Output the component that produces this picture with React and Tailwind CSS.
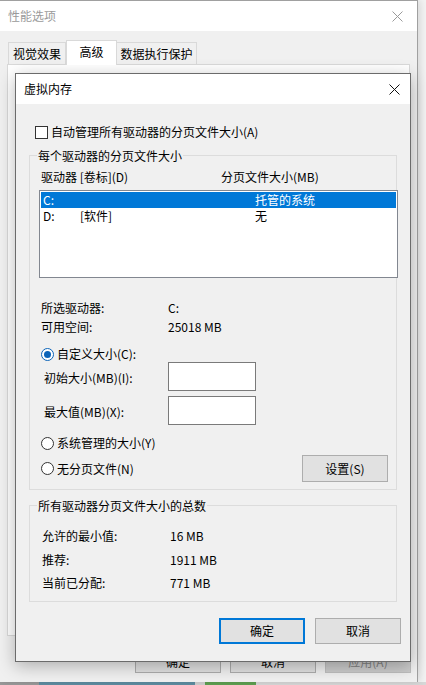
import React from "react";

function CloseIcon({ color }) {
  return (
    <svg width="11" height="11" viewBox="0 0 11 11" className="block">
      <path d="M0.5 0.5 L10.5 10.5 M10.5 0.5 L0.5 10.5" stroke={color} strokeWidth="1" fill="none" />
    </svg>
  );
}

function Radio({ checked, label }) {
  return (
    <div className="flex h-[16px] items-center">
      {checked ? (
        <span className="flex h-[13px] w-[13px] items-center justify-center rounded-full border border-[#0b63b8] bg-white">
          <span className="h-[7px] w-[7px] rounded-full bg-[#0b63b8]" />
        </span>
      ) : (
        <span className="h-[13px] w-[13px] rounded-full border border-[#333333] bg-white" />
      )}
      <span className="ml-[3px]">{label}</span>
    </div>
  );
}

function Group({ title, children, className }) {
  return (
    <div className={"w-[368px] border border-[#dcdcdc] " + (className || "")}>
      <div className="-mt-[8px] ml-[7px] w-fit bg-[#f0f0f0] px-px leading-[16px]">{title}</div>
      {children}
    </div>
  );
}

function VirtualMemoryDialog() {
  return (
    <div className="absolute left-[15px] top-[72px] flex h-[589px] w-[396px] flex-col border border-[#6b6b6b] bg-[#f0f0f0] shadow-[0_4px_16px_rgba(0,0,0,0.28)]">
      <div className="flex h-[30px] items-center justify-between bg-white pl-[8px] pr-[10px]">
        <span className="text-black">虚拟内存</span>
        <CloseIcon color="#111111" />
      </div>

      <div className="mt-[21px] flex h-[14px] items-center pl-[19px]">
        <span className="h-[13px] w-[13px] border border-[#333333] bg-white" />
        <span className="ml-[3px]">自动管理所有驱动器的分页文件大小(A)</span>
      </div>

      <Group title="每个驱动器的分页文件大小" className="ml-[13px] mt-[16px]">
        <div className="mt-[5px] flex pl-[11px]">
          <span className="w-[180px]">驱动器 [卷标](D)</span>
          <span>分页文件大小(MB)</span>
        </div>
        <div className="ml-[9px] mt-[5px] h-[88px] w-[359px] border border-[#828790] bg-white p-px">
          <div className="flex h-[16px] items-center bg-[#0078d7] pl-[2px] text-white">
            <span className="w-[37px]">C:</span>
            <span className="w-[175px]"></span>
            <span>托管的系统</span>
          </div>
          <div className="flex h-[16px] items-center pl-[2px]">
            <span className="w-[37px]">D:</span>
            <span className="w-[175px]">[软件]</span>
            <span>无</span>
          </div>
        </div>

        <div className="mt-[20px] pl-[11px] leading-[19px]">
          <div className="flex">
            <span className="w-[127px]">所选驱动器:</span>
            <span>C:</span>
          </div>
          <div className="flex">
            <span className="w-[127px]">可用空间:</span>
            <span>25018 MB</span>
          </div>
        </div>

        <div className="mt-[10px] pl-[11px]">
          <Radio checked label="自定义大小(C):" />
        </div>

        <div className="flex items-center pl-[14px]">
          <span className="mt-[3px] w-[124px]">初始大小(MB)(I):</span>
          <div className="h-[29px] w-[88px] border border-[#7a7a7a] bg-white" />
        </div>
        <div className="mt-[5px] flex items-center pl-[14px]">
          <span className="mt-[3px] w-[124px]">最大值(MB)(X):</span>
          <div className="h-[29px] w-[88px] border border-[#7a7a7a] bg-white" />
        </div>

        <div className="mt-[10px] pl-[11px]">
          <Radio label="系统管理的大小(Y)" />
        </div>

        <div className="mb-[7px] mt-[4px] flex items-center justify-between pl-[11px] pr-[8px]">
          <Radio label="无分页文件(N)" />
          <button
            type="button"
            className="h-[27px] w-[86px] border border-[#adadad] bg-[#e1e1e1] leading-[16px]"
          >
            设置(S)
          </button>
        </div>
      </Group>

      <Group title="所有驱动器分页文件大小的总数" className="ml-[13px] mt-[15px]">
        <div className="mb-[6px] mt-[10px] pl-[12px] leading-[23.5px]">
          <div className="flex">
            <span className="w-[128px]">允许的最小值:</span>
            <span>16 MB</span>
          </div>
          <div className="flex">
            <span className="w-[128px]">推荐:</span>
            <span>1911 MB</span>
          </div>
          <div className="flex">
            <span className="w-[128px]">当前已分配:</span>
            <span>771 MB</span>
          </div>
        </div>
      </Group>

      <div className="mt-[16px] flex justify-end gap-[10px] pr-[9px]">
        <button
          type="button"
          className="h-[26px] w-[86px] border-2 border-[#0078d7] bg-[#e1e1e1] leading-[16px]"
        >
          确定
        </button>
        <button
          type="button"
          className="h-[26px] w-[86px] border border-[#adadad] bg-[#e1e1e1] leading-[16px]"
        >
          取消
        </button>
      </div>
    </div>
  );
}

export default function App() {
  return (
    <div className="relative flex h-[685px] w-[426px] flex-col overflow-hidden bg-[#f3f3f3] font-['Microsoft_YaHei_UI','Noto_Sans_CJK_SC',sans-serif] text-[12px] leading-[16px] text-black">
      <div className="relative flex h-[682px] w-[418px] flex-col border-r border-t border-[#a0a0a0] bg-[#f0f0f0] shadow-[2px_0_8px_rgba(0,0,0,0.12)]">
        <div className="flex h-[30px] items-center justify-between bg-white pl-[8px] pr-[14px]">
          <span className="text-[#9a9a9a]">性能选项</span>
          <CloseIcon color="#9a9a9a" />
        </div>

        <div className="mt-[9px] flex h-[24px] items-end pl-[8px]">
          <div className="flex h-[22px] w-[58px] items-center justify-center border border-b-0 border-[#d9d9d9] bg-[#f0f0f0]">
            视觉效果
          </div>
          <div className="relative z-10 -mb-px flex h-[25px] w-[51px] justify-center border border-b-0 border-[#d9d9d9] bg-white pt-[3px]">
            高级
          </div>
          <div className="flex h-[22px] w-[80px] items-center justify-center border border-l-0 border-b-0 border-[#d9d9d9] bg-[#f0f0f0]">
            数据执行保护
          </div>
        </div>

        <div className="ml-[7px] h-[572px] w-[403px] border border-[#d9d9d9] bg-white" />

        <div className="mt-[14px] flex justify-end gap-[9px] pr-[6px]">
          <button type="button" className="h-[23px] w-[86px] border border-[#adadad] bg-[#e1e1e1]">
            确定
          </button>
          <button type="button" className="h-[23px] w-[86px] border border-[#adadad] bg-[#e1e1e1]">
            取消
          </button>
          <button type="button" className="h-[23px] w-[86px] border border-[#bfbfbf] bg-[#cccccc] text-[#838383]">
            应用(A)
          </button>
        </div>

        <VirtualMemoryDialog />
      </div>

      <div className="flex h-[3px]">
        <div className="w-[39px] bg-[#9a9a9a]" />
        <div className="w-[156px] bg-[#5f8ea2]" />
        <div className="w-[10px] bg-[#d0d0d0]" />
        <div className="w-[51px] bg-[#5fa052]" />
        <div className="flex-1 bg-[#d8d8d8]" />
      </div>
    </div>
  );
}
